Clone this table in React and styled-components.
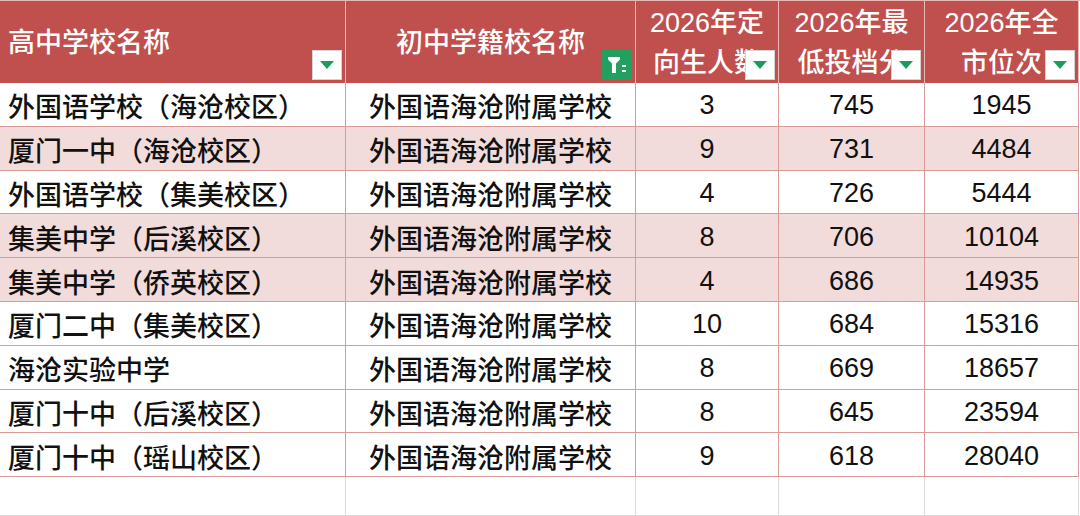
import styled, { createGlobalStyle } from "styled-components";

const GlobalStyle = createGlobalStyle`
  html, body {
    margin: 0;
    padding: 0;
    background: #ffffff;
  }
  body {
    font-family: "Liberation Sans", "Noto Sans CJK SC", sans-serif;
  }
`;

const Sheet = styled.div`
  width: 1080px;
  height: 516px;
  overflow: hidden;
  display: grid;
  grid-template-columns: 346px 290px 143px 146px 154px 1fr;
  grid-template-rows: 83px repeat(9, 43.8px) 1fr;
  font-size: 27px;
  font-weight: 500;
  color: #111;
`;

const HeadCell = styled.div`
  position: relative;
  background: #c0504d;
  color: #ffffff;
  border-top: 1px solid #e8b9b7;
  border-right: 1px solid #e8b9b7;
  display: flex;
  flex-direction: column;
  justify-content: center;
  align-items: ${(p) => (p.$left ? "flex-start" : "center")};
  padding: ${(p) => (p.$left ? "2px 0 0 8px" : "2px 0 0 0")};
  line-height: 40px;
  overflow: hidden;
  white-space: nowrap;
  box-sizing: border-box;
`;

const Spacer = styled.div`
  border-top: 1px solid #e8b9b7;
  background: #ffffff;
`;

const Cell = styled.div`
  background: ${(p) => (p.$pink ? "#f2dcdb" : "#ffffff")};
  border-right: 1px solid #d99a98;
  border-bottom: 1px solid #d99a98;
  display: flex;
  align-items: center;
  justify-content: ${(p) => (p.$left ? "flex-start" : "center")};
  padding-left: ${(p) => (p.$left ? "8px" : "0")};
  padding-top: 3px;
  white-space: nowrap;
  overflow: hidden;
  box-sizing: border-box;
`;

const EmptyCell = styled.div`
  border-right: 1px solid #dcdcdc;
  border-bottom: 1px solid #dcdcdc;
  background: #ffffff;
`;

const FilterBtn = styled.div`
  position: absolute;
  right: 3px;
  bottom: 3px;
  width: 30px;
  height: 30px;
  box-sizing: border-box;
  background: ${(p) => (p.$active ? "#21a060" : "#ffffff")};
  border: 1px solid ${(p) => (p.$active ? "#21a060" : "#d4d4d4")};
  display: flex;
  align-items: center;
  justify-content: center;
`;

const Arrow = () => (
  <svg width="14" height="8" viewBox="0 0 14 8">
    <path d="M0 0 H14 L7 8 Z" fill="#1f9a5c" />
  </svg>
);

const Funnel = () => (
  <svg width="22" height="20" viewBox="0 0 22 20">
    <path d="M2 2 H14 V4.5 L10 8.5 V18 H6 V8.5 L2 4.5 Z" fill="#ffffff" />
    <rect x="16" y="10" width="4" height="2" fill="#ffffff" />
    <rect x="16" y="15" width="4" height="2" fill="#ffffff" />
  </svg>
);

const rows = [
  ["外国语学校（海沧校区）", "3", "745", "1945", false],
  ["厦门一中（海沧校区）", "9", "731", "4484", true],
  ["外国语学校（集美校区）", "4", "726", "5444", false],
  ["集美中学（后溪校区）", "8", "706", "10104", true],
  ["集美中学（侨英校区）", "4", "686", "14935", true],
  ["厦门二中（集美校区）", "10", "684", "15316", false],
  ["海沧实验中学", "8", "669", "18657", false],
  ["厦门十中（后溪校区）", "8", "645", "23594", false],
  ["厦门十中（瑶山校区）", "9", "618", "28040", false],
];

function Row({ name, n, score, rank, pink }) {
  return (
    <>
      <Cell $left $pink={pink}>{name}</Cell>
      <Cell $pink={pink}>外国语海沧附属学校</Cell>
      <Cell $pink={pink}>{n}</Cell>
      <Cell $pink={pink}>{score}</Cell>
      <Cell $pink={pink}>{rank}</Cell>
      <div />
    </>
  );
}

export default function App() {
  return (
    <>
      <GlobalStyle />
      <Sheet>
        <HeadCell $left>
          高中学校名称
          <FilterBtn>
            <Arrow />
          </FilterBtn>
        </HeadCell>
        <HeadCell>
          初中学籍校名称
          <FilterBtn $active>
            <Funnel />
          </FilterBtn>
        </HeadCell>
        <HeadCell>
          <span>2026年定</span>
          <span>向生人数</span>
          <FilterBtn>
            <Arrow />
          </FilterBtn>
        </HeadCell>
        <HeadCell>
          <span>2026年最</span>
          <span>低投档分</span>
          <FilterBtn>
            <Arrow />
          </FilterBtn>
        </HeadCell>
        <HeadCell>
          <span>2026年全</span>
          <span>市位次</span>
          <FilterBtn>
            <Arrow />
          </FilterBtn>
        </HeadCell>
        <Spacer />

        {rows.map(([name, n, score, rank, pink]) => (
          <Row key={name} name={name} n={n} score={score} rank={rank} pink={pink} />
        ))}

        <EmptyCell />
        <EmptyCell />
        <EmptyCell />
        <EmptyCell />
        <EmptyCell />
        <div />
      </Sheet>
    </>
  );
}
